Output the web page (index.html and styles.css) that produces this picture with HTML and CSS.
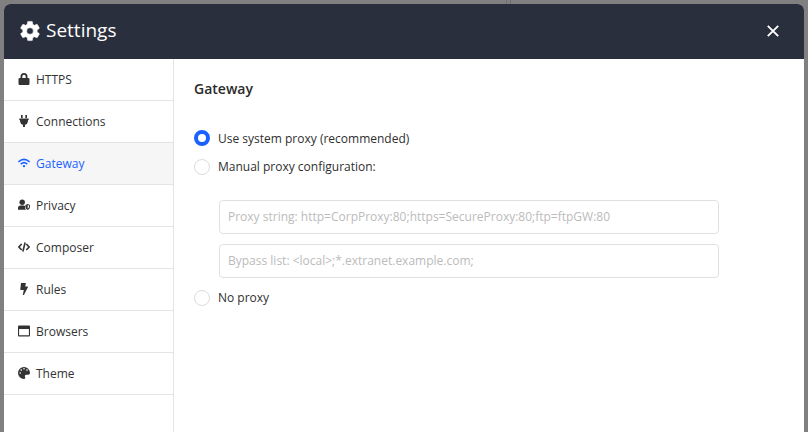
FILE: index.html
```
<!DOCTYPE html>
<html lang="en">
<head>
<meta charset="utf-8">
<title>Settings</title>
<link rel="stylesheet" href="styles.css">
</head>
<body>
<div class="backdrop-divider"></div>
<section class="dialog">
  <header class="dialog-header">
    <svg class="gear" viewBox="0 0 24 24"><path fill="currentColor" d="M19.14 12.94c.04-.3.06-.61.06-.94 0-.32-.02-.64-.07-.94l2.03-1.58a.49.49 0 0 0 .12-.61l-1.92-3.32a.49.49 0 0 0-.59-.22l-2.39.96c-.5-.38-1.03-.7-1.62-.94l-.36-2.54a.48.48 0 0 0-.48-.41h-3.84a.48.48 0 0 0-.47.41l-.36 2.54c-.59.24-1.13.57-1.62.94l-2.39-.96a.48.48 0 0 0-.59.22L2.74 8.87a.48.48 0 0 0 .12.61l2.03 1.58c-.05.3-.09.63-.09.94s.02.64.07.94l-2.03 1.58a.49.49 0 0 0-.12.61l1.92 3.32c.12.22.37.29.59.22l2.39-.96c.5.38 1.03.7 1.62.94l.36 2.54c.05.24.24.41.48.41h3.84c.24 0 .44-.17.47-.41l.36-2.54c.59-.24 1.13-.56 1.62-.94l2.39.96c.22.08.47 0 .59-.22l1.92-3.32a.48.48 0 0 0-.12-.61zM12 15.3A3.3 3.3 0 1 1 12 8.700a3.300 3.300 0 0 1 0 6.600z" stroke="currentColor" stroke-width=".5"/></svg>
    <h1>Settings</h1>
    <svg class="close" viewBox="0 0 12 12"><path d="M.8.8 11.2 11.2M11.2.8.8 11.2" stroke="currentColor" stroke-width="1.9"/></svg>
  </header>
  <div class="dialog-body">
    <nav class="sidebar">
      <a class="item"><svg viewBox="0 0 12 12"><path fill="currentColor" fill-rule="evenodd" d="M2.5 5V3.5a3.5 3.5 0 0 1 7 0V5h.8q1.2 0 1.2 1.2v4.6q0 1.2-1.2 1.2H1.7Q.5 12 .5 10.8V6.200Q.5 5 1.700 5zM4.300 5h3.400V3.500a1.700 1.700 0 0 0-3.400 0z"/></svg>HTTPS</a>
      <a class="item"><svg viewBox="0 0 12 12"><path fill="currentColor" d="M3 0h1.700v3H3zM7.300 0H9v3H7.300zM1.300 3.500h9.400v1.500H10v1.200A4 4 0 0 1 7 9.700V12H5V9.700A4 4 0 0 1 2 6.200V5h-.7z"/></svg>Connections</a>
      <a class="item active"><svg viewBox="0 0 12 12"><path fill="none" stroke="currentColor" stroke-width="1.500" d="M.4 4.900Q6-.1 11.600 4.900M2.700 7.100Q6 4.100 9.300 7.100"/><circle fill="currentColor" cx="6" cy="9.100" r="1.200"/></svg>Gateway</a>
      <a class="item"><svg viewBox="0 0 12 12"><circle fill="currentColor" cx="4.200" cy="3.200" r="2.700"/><path fill="currentColor" fill-rule="evenodd" d="M0 10.800V9.200Q0 6.600 2.600 6.600H5.800L7 7v1.800Q7 10 8 10.800zM9.700 5l2.300.9v1.800Q12 10 9.700 11 7.400 10 7.400 7.700V5.900zM9.700 6.100v3.700Q11.100 9 11.100 7.600V6.600z"/></svg>Privacy</a>
      <a class="item"><svg viewBox="0 0 12 12"><path fill="none" stroke="currentColor" stroke-width="1.600" d="M3.700 3 .9 6l2.800 3M8.300 3l2.800 3-2.800 3M7.100 1.500 4.900 10.500"/></svg>Composer</a>
      <a class="item"><svg viewBox="0 0 12 12"><path fill="currentColor" d="M3 0h4.900L7.200 3.500h2.300q.8 0 .4.700L5.900 12H4.800L5.800 7H2.800q-.6 0-.5-.6z"/></svg>Rules</a>
      <a class="item"><svg viewBox="0 0 12 12"><path fill="currentColor" fill-rule="evenodd" d="M1 .6h10q1 0 1 1v8.800q0 1-1 1H1q-1 0-1-1V1.600q0-1 1-1zM1.100 4v6.200h9.800V4z"/></svg>Browsers</a>
      <a class="item"><svg viewBox="0 0 12 12"><path fill="currentColor" fill-rule="evenodd" d="M6 0a6 6 0 0 0 0 12c1.200 0 1.500-.8 1.100-1.700C6.500 9 7 7.800 8.300 7.800h1.900Q12 7.600 12 6A6 6 0 0 0 6 0zM2.200 5.200a.8.8 0 1 0 0 1.600.8.8 0 0 0 0-1.600zM3.200 2.300a.8.8 0 1 0 0 1.600.8.8 0 0 0 0-1.600zM6 .9a.8.8 0 1 0 0 1.600.8.8 0 0 0 0-1.600zM9 2.300a.8.8 0 1 0 0 1.600.8.8 0 0 0 0-1.600z"/></svg>Theme</a>
    </nav>
    <main class="panel">
      <h2>Gateway</h2>
      <label class="option system"><input type="radio" name="proxy" checked><span>Use system proxy (recommended)</span></label>
      <label class="option manual"><input type="radio" name="proxy"><span>Manual proxy configuration:</span></label>
      <div class="fields">
        <input type="text" placeholder="Proxy string: http=CorpProxy:80;https=SecureProxy:80;ftp=ftpGW:80">
        <input type="text" placeholder="Bypass list: &lt;local&gt;;*.extranet.example.com;">
      </div>
      <label class="option"><input type="radio" name="proxy"><span>No proxy</span></label>
    </main>
  </div>
</section>
</body>
</html>
```
FILE: styles.css
```
* { box-sizing: border-box; }
body {
  margin: 0;
  height: 432px;
  padding: 4px 4px 0;
  overflow: hidden;
  background: #808080;
  color: #2f2f2f;
  font: 12px/18px "Open Sans", "Noto Sans", sans-serif;
}
.backdrop-divider {
  position: absolute;
  top: 0;
  left: 506px;
  width: 5px;
  height: 4px;
  border: solid #707070;
  border-width: 0 1px;
}
.dialog {
  position: relative;
  height: 428px;
  display: flex;
  flex-direction: column;
  overflow: hidden;
  border-radius: 6px 6px 0 0;
  background: #fff;
}
.dialog-header {
  flex: none;
  height: 55px;
  display: flex;
  align-items: center;
  padding: 0 25px 1px 14px;
  background: #2a2f3d;
  color: #fff;
}
.gear { width: 24px; height: 24px; }
.dialog-header h1 {
  flex: 1;
  margin: 0 0 2px 4px;
  font-size: 19px;
  font-weight: 400;
  line-height: 28px;
}
.close { width: 12px; height: 12px; }
.dialog-body { flex: 1; display: flex; }
.sidebar { width: 170px; border-right: 1px solid #e4e4e4; }
.item {
  height: 42px;
  display: flex;
  align-items: center;
  gap: 6px;
  padding-left: 14px;
  border-bottom: 1px solid #e4e4e4;
  color: #333;
}
.item svg { width: 12px; height: 12px; margin-bottom: 1px; }
.item.active { background: #f6f6f6; color: #1a62ff; }
.panel { flex: 1; padding: 19px 20px; }
.panel h2 {
  margin: 0 0 29px;
  color: #2b2b2b;
  font-size: 14px;
  font-weight: 600;
  line-height: 22px;
}
.option { display: flex; align-items: center; gap: 8px; height: 18px; }
.option.system span { padding-top: 2px; }
.option.manual { margin-top: 11px; }
.option input {
  appearance: none;
  width: 16px;
  height: 16px;
  margin: 0;
  border: 1px solid #dcdcdc;
  border-radius: 50%;
  background: #fff;
}
.option input:checked { border: 4px solid #1a62ff; }
.fields {
  display: grid;
  gap: 10px;
  width: 500px;
  margin: 24px 0 11px 25px;
}
.fields input {
  height: 34px;
  padding: 0 8px 1px;
  border: 1px solid #e0e0e0;
  border-radius: 4px;
  font: inherit;
}
.fields input::placeholder { color: #bbb; opacity: 1; }
```
